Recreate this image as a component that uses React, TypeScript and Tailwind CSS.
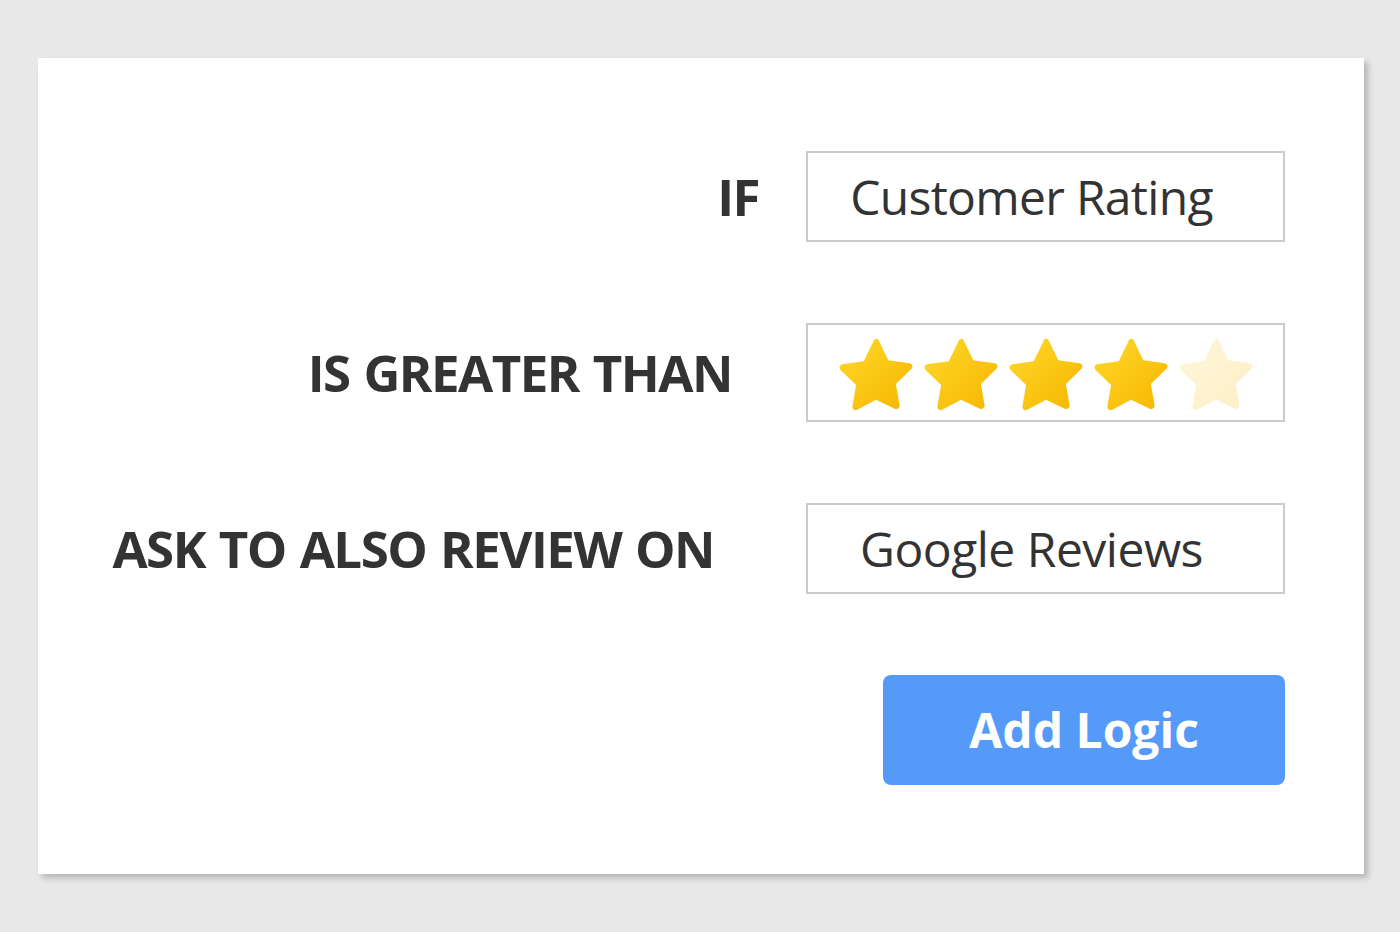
import React from 'react';

const labelFont = { fontFamily: '"Open Sans", "Noto Sans", sans-serif' };

function Star({ pale = false, id }: { pale?: boolean; id: string }) {
  return (
    <svg width="76" height="73" viewBox="1.2 0.6 21.6 20.8" className="shrink-0">
      <defs>
        <linearGradient id={id} x1="0" y1="0" x2="1" y2="1">
          <stop offset="0" stopColor={pale ? '#fff7dc' : '#ffd92a'} />
          <stop offset="1" stopColor={pale ? '#fdefc6' : '#f6b500'} />
        </linearGradient>
      </defs>
      <path
        d="M12 0.8c0.35 0 0.62 0.2 0.78 0.52l2.72 5.6 6.1 0.86c0.78 0.11 1.08 1.06 0.5 1.6l-4.43 4.3 1.05 6.08c0.13 0.77-0.68 1.36-1.37 0.99L12 18.2l-5.35 2.87c-0.69 0.37-1.5-0.22-1.37-0.99l1.05-6.08-4.43-4.3c-0.58-0.54-0.28-1.49 0.5-1.6l6.1-0.86 2.72-5.6C11.38 1 11.65 0.8 12 0.8z"
        fill={`url(#${id})`}
      />
    </svg>
  );
}

function Row({ label, gap, children, tall }: any) {
  return (
    <div className="flex items-center">
      <span
        className="text-[51px] font-bold text-[#333] leading-none whitespace-nowrap tracking-[-1.5px] [word-spacing:2px]"
        style={{ ...labelFont, marginRight: gap }}
      >
        {label}
      </span>
      <div
        className={`w-[479px] ${tall ? 'h-[99px]' : 'h-[91px]'} border-2 border-[#cbcbcb] bg-white flex items-center justify-center`}
      >
        {children}
      </div>
    </div>
  );
}

export default function App() {
  return (
    <div className="min-h-[932px] w-full bg-[#e8e8e8] pt-[58px] pl-[38px]">
      <div className="w-[1326px] h-[816px] bg-white shadow-[4px_4px_6px_rgba(0,0,0,0.22)] flex flex-col items-end pt-[93px] pr-[79px] gap-[81px]">
        <Row label="IF" gap={47}>
          <span className="text-[48px] text-[#333] leading-none pr-[28px] tracking-[-0.7px]" style={labelFont}>
            Customer Rating
          </span>
        </Row>
        <Row label="IS GREATER THAN" gap={74} tall>
          <div className="flex items-center gap-[9px] mt-[3px]">
            <Star id="s1" />
            <Star id="s2" />
            <Star id="s3" />
            <Star id="s4" />
            <Star id="s5" pale />
          </div>
        </Row>
        <Row label="ASK TO ALSO REVIEW ON" gap={92}>
          <span className="text-[48px] text-[#333] leading-none pr-[28px] tracking-[-0.5px]" style={labelFont}>
            Google Reviews
          </span>
        </Row>
        <button
          className="w-[402px] h-[110px] rounded-[8px] bg-[#559af9] text-white text-[48px] font-bold leading-none"
          style={labelFont}
        >
          Add Logic
        </button>
      </div>
    </div>
  );
}
